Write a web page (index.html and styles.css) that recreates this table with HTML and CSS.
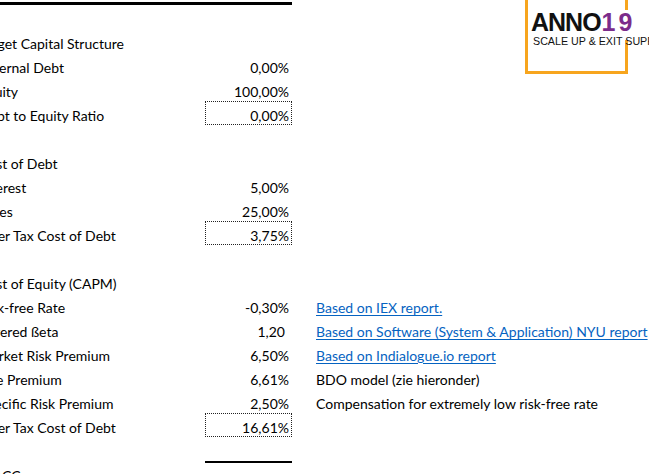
FILE: index.html
```html
<!DOCTYPE html>
<html lang="en">
<head>
<meta charset="utf-8">
<title>WACC</title>
<link rel="stylesheet" href="styles.css">
</head>
<body>
<div class="sheet">
  <div class="top-rule"></div>
  <div class="row"></div>
  <div class="row"><span class="label">Target Capital Structure</span></div>
  <div class="row"><span class="label">External Debt</span><span class="val">0,00%</span></div>
  <div class="row"><span class="label">Equity</span><span class="val">100,00%</span></div>
  <div class="row"><span class="label">Debt to Equity Ratio</span><span class="val boxed">0,00%</span></div>
  <div class="row"></div>
  <div class="row"><span class="label">Cost of Debt</span></div>
  <div class="row"><span class="label">Interest</span><span class="val">5,00%</span></div>
  <div class="row"><span class="label">Taxes</span><span class="val">25,00%</span></div>
  <div class="row"><span class="label">After Tax Cost of Debt</span><span class="val boxed">3,75%</span></div>
  <div class="row"></div>
  <div class="row"><span class="label">Cost of Equity (CAPM)</span></div>
  <div class="row"><span class="label">Risk-free Rate</span><span class="val">-0,30%</span><a class="note link" href="#">Based on IEX report. </a></div>
  <div class="row"><span class="label">Levered ßeta</span><span class="val num">1,20</span><a class="note link" href="#">Based on Software (System &amp; Application) NYU report</a></div>
  <div class="row"><span class="label">Market Risk Premium</span><span class="val">6,50%</span><a class="note link" href="#">Based on Indialogue.io report</a></div>
  <div class="row"><span class="label">Size Premium</span><span class="val">6,61%</span><span class="note">BDO model (zie hieronder)</span></div>
  <div class="row"><span class="label">Specific Risk Premium</span><span class="val">2,50%</span><span class="note">Compensation for extremely low risk-free rate</span></div>
  <div class="row"><span class="label">After Tax Cost of Debt</span><span class="val boxed">16,61%</span></div>
  <div class="row"></div>
  <div class="row"><span class="label">WACC</span><span class="val total">16,61%</span></div>
</div>

<div class="logo">
  <div class="logo-frame"></div>
  <div class="logo-text">
    <div class="logo-word">ANNO<span class="logo-num">19</span></div>
    <div class="logo-tag">SCALE UP &amp; EXIT SUPPORT</div>
  </div>
</div>
</body>
</html>
```

FILE: styles.css
```css
html, body {
  margin: 0;
  padding: 0;
  background: #fff;
  overflow: hidden;
  width: 649px;
  height: 474px;
}

body {
  font-family: Lato, "Liberation Sans", sans-serif;
  font-size: 14px;
  color: #000;
}

.sheet {
  margin-left: -21px;
  white-space: nowrap;
}

.top-rule {
  margin-top: 2px;
  width: 313px;
  height: 3px;
  background: #000;
}

.row {
  display: grid;
  grid-template-columns: 226px 87px 1fr;
  height: 24px;
}

.label,
.val,
.note {
  box-sizing: border-box;
  height: 24px;
  padding-top: 5px;
  line-height: 19px;
}

.label {
  grid-column: 1;
  overflow: hidden;
}

.val {
  grid-column: 2;
  text-align: right;
  padding-right: 3px;
}

.val.num {
  padding-right: 7px;
}

.val.boxed {
  border: 1px dotted #222;
  padding-top: 4px;
  padding-right: 2px;
}

.val.total {
  border-top: 2px solid #000;
  padding-top: 9px;
}

.note {
  grid-column: 3;
  padding-left: 24px;
  color: #000;
}

.note.link {
  color: #0563c1;
  text-decoration: underline;
  text-underline-offset: 2px;
}

.logo {
  position: absolute;
  left: 525px;
  top: -10px;
}

.logo-frame {
  width: 97px;
  height: 81px;
  border: 3px solid #f7a51e;
  border-top: none;
}

.logo-text {
  position: absolute;
  left: 6px;
  top: 20px;
  width: 140px;
  height: 30px;
  background: #fff;
}

.logo-word {
  padding-top: 3px;
  font-family: "Liberation Sans", Arial, sans-serif;
  font-weight: 700;
  font-size: 25px;
  line-height: 18px;
  letter-spacing: -1px;
  color: #111;
  white-space: nowrap;
}

.logo-num {
  color: #7b2c8b;
  letter-spacing: 3px;
  margin-left: 1px;
}

.logo-tag {
  margin-top: 6px;
  margin-left: 2px;
  font-family: "Liberation Sans", Arial, sans-serif;
  font-size: 10.7px;
  line-height: 9px;
  color: #111;
  white-space: nowrap;
}
```
